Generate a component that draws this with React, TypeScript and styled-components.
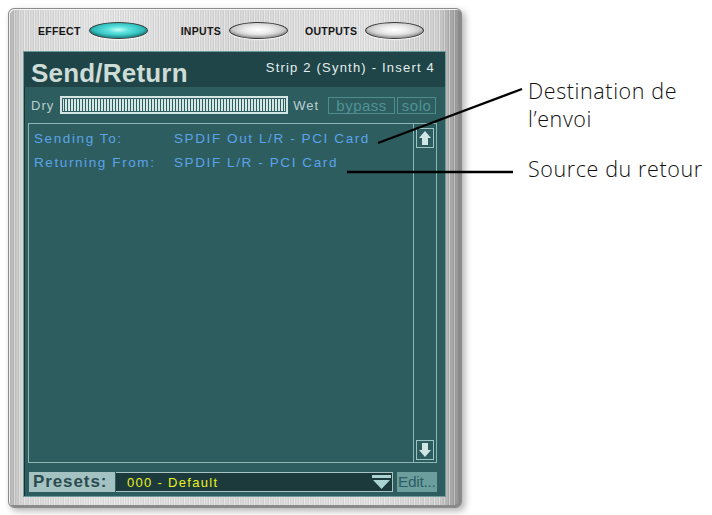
import React from 'react';
import styled, { createGlobalStyle } from 'styled-components';

const GlobalStyle = createGlobalStyle`
  html, body {
    margin: 0;
    padding: 0;
    background: #ffffff;
  }
  body {
    font-family: 'Liberation Sans', Arial, sans-serif;
  }
`;

const Page = styled.div`
  position: relative;
  width: 712px;
  height: 515px;
  display: flex;
  flex-direction: row;
  align-items: flex-start;
  padding: 8px 0 0 8px;
  box-sizing: border-box;
`;

const Window = styled.div`
  width: 454px;
  height: 500px;
  box-sizing: border-box;
  display: flex;
  flex-direction: column;
  padding: 0 16px 11px 15px;
  border: 1px solid #8c8c8c;
  border-radius: 6px;
  background:
    repeating-linear-gradient(
      90deg,
      rgba(255, 255, 255, 0.35) 0 1px,
      rgba(0, 0, 0, 0.04) 1px 2px,
      rgba(255, 255, 255, 0) 2px 4px,
      rgba(0, 0, 0, 0.06) 4px 5px
    ),
    linear-gradient(
      90deg,
      #b4b4b4 0,
      #d8d8d8 3%,
      #e4e4e4 20%,
      #d8d8d8 50%,
      #e2e2e2 80%,
      #cfcfcf 95%,
      #8e8e8e 100%
    );
  box-shadow: 3px 3px 7px rgba(0, 0, 0, 0.3), inset 1px 1px 0 #f4f4f4,
    inset -2px -2px 0 #8a8a8a;
`;

const TopBar = styled.div`
  height: 43px;
  display: flex;
  align-items: center;
`;

const TabGroup = styled.div<{ $ml: number }>`
  display: flex;
  align-items: center;
  gap: 8px;
  margin-left: ${(p) => p.$ml}px;
`;

const TabLabel = styled.span`
  font-family: 'Liberation Sans', Arial, sans-serif;
  font-weight: 700;
  font-size: 10.5px;
  letter-spacing: 0.3px;
  color: #151515;
  transform: scaleY(1.1);
`;

const Pill = styled.div<{ $active?: boolean }>`
  width: 57px;
  height: 15px;
  border-radius: 50%;
  border: 1.5px solid #3a3a3a;
  background: ${(p) =>
    p.$active
      ? 'radial-gradient(ellipse at 50% 45%, #c8fffb 0, #5fe3df 25%, #2fbdbc 60%, #17807f 100%)'
      : 'radial-gradient(ellipse at 50% 45%, #ffffff 0, #eeeeee 30%, #c4c4c4 70%, #8e8e8e 100%)'};
  box-shadow: 0 1px 1px rgba(255, 255, 255, 0.8), inset 0 -2px 2px rgba(0, 0, 0, 0.2);
`;

const Panel = styled.div`
  flex: 1;
  display: flex;
  flex-direction: column;
  background: #2e5d60;
  box-shadow: inset 1px 1px 0 #153436, 0 0 0 1px #6f9a9a;
`;

const TitleBar = styled.div`
  height: 35px;
  background: #1f4548;
  display: flex;
  align-items: flex-start;
  justify-content: space-between;
  padding: 0 10px 0 7px;
`;

const Title = styled.span`
  font-family: 'Liberation Sans', Arial, sans-serif;
  font-weight: 700;
  font-size: 26px;
  line-height: 26px;
  margin-top: 8px;
  letter-spacing: 0.2px;
  color: #cddcd6;
`;

const StripInfo = styled.span`
  font-family: 'Liberation Sans', Arial, sans-serif;
  font-size: 13px;
  margin-top: 8px;
  letter-spacing: 1.2px;
  color: #e4eeee;
`;

const MixRow = styled.div`
  height: 36px;
  display: flex;
  align-items: center;
  padding-left: 7px;
`;

const MixLabel = styled.span`
  font-family: 'Liberation Sans', Arial, sans-serif;
  font-size: 13px;
  letter-spacing: 1px;
  color: #b9cfcf;
`;

const Meter = styled.div`
  width: 224px;
  height: 14px;
  margin: 0 5px 0 6px;
  border: 2px solid #d4e6e4;
  background: repeating-linear-gradient(
    90deg,
    #d6e8e6 0 2px,
    #2e5d60 2px 3px
  );
  box-shadow: inset 0 0 0 1px #2e5d60;
`;

const ToggleBox = styled.span<{ $w: number; $ml: number }>`
  width: ${(p) => p.$w}px;
  height: 17px;
  box-sizing: border-box;
  border: 1px solid #4d8d8e;
  display: flex;
  align-items: center;
  justify-content: center;
  margin-left: ${(p) => p.$ml}px;
  font-family: 'Liberation Sans', Arial, sans-serif;
  font-size: 15px;
  letter-spacing: 0.5px;
  color: #4f9394;
`;

const ContentBox = styled.div`
  height: 340px;
  margin: 0 8px 0 4px;
  box-sizing: border-box;
  border: 1px solid #8db6b5;
  display: flex;
`;

const RoutingList = styled.div`
  flex: 1;
  padding: 2px 0 0 5px;
`;

const RouteRow = styled.div`
  display: flex;
  height: 24px;
  align-items: center;
  font-family: 'Liberation Sans', Arial, sans-serif;
  font-size: 13.5px;
  letter-spacing: 1.6px;
  color: #5ba4ea;
`;

const RouteKey = styled.span`
  width: 140px;
`;

const ScrollColumn = styled.div`
  width: 22px;
  border-left: 1px solid #8db6b5;
  display: flex;
  flex-direction: column;
  justify-content: space-between;
  align-items: center;
  padding: 4px 0 2px;
`;

const ArrowBtn = styled.div`
  width: 18px;
  height: 20px;
  box-sizing: border-box;
  border: 1px solid #9cc4c2;
  display: flex;
  align-items: center;
  justify-content: center;
`;

const PresetRow = styled.div`
  height: 20px;
  margin: 9px 8px 0 5px;
  display: flex;
  align-items: stretch;
`;

const PresetLabel = styled.span`
  width: 86px;
  background: #a3c2c1;
  font-family: 'Liberation Sans', Arial, sans-serif;
  font-weight: 700;
  font-size: 17px;
  line-height: 20px;
  letter-spacing: 0.9px;
  color: #2b4b4f;
  padding-left: 4px;
  box-sizing: border-box;
`;

const PresetField = styled.div`
  width: 277px;
  margin-left: 1px;
  box-sizing: border-box;
  background: #1c393b;
  border: 1px solid #a9c4c3;
  border-left: none;
  display: flex;
  align-items: center;
  justify-content: space-between;
  padding: 0 1px 0 11px;
`;

const PresetValue = styled.span`
  font-family: 'Liberation Sans', Arial, sans-serif;
  font-size: 13px;
  letter-spacing: 1.3px;
  color: #e8f21e;
`;

const EditButton = styled.span`
  flex: 1;
  margin-left: 4px;
  background: #6d9e9e;
  font-family: 'Liberation Sans', Arial, sans-serif;
  font-size: 15.5px;
  line-height: 20px;
  letter-spacing: -0.3px;
  color: #2c5e63;
  padding-left: 1px;
  overflow: hidden;
  white-space: nowrap;
`;

const Notes = styled.div`
  margin-left: 66px;
  margin-top: 69px;
  display: flex;
  flex-direction: column;
`;

const NoteText = styled.div<{ $gap?: number }>`
  font-family: 'Open Sans', 'Noto Sans', sans-serif;
  font-weight: 300;
  font-size: 21.5px;
  line-height: 28px;
  letter-spacing: 0.6px;
  color: #111111;
  margin-top: ${(p) => p.$gap ?? 0}px;
`;

const Leaders = styled.svg`
  position: absolute;
  left: 0;
  top: 0;
  pointer-events: none;
`;

const UpArrow = () => (
  <svg width="14" height="16" viewBox="0 0 14 16">
    <polygon points="7,1 13,8 10,8 10,15 4,15 4,8 1,8" fill="#cfe6e4" />
  </svg>
);

const DownArrow = () => (
  <svg width="14" height="16" viewBox="0 0 14 16">
    <polygon points="7,15 13,8 10,8 10,1 4,1 4,8 1,8" fill="#cfe6e4" />
  </svg>
);

const DropTriangle = () => (
  <svg width="19" height="16" viewBox="0 0 19 16">
    <rect x="0" y="1" width="19" height="3" fill="#aad3d2" />
    <polygon points="1,6 18,6 9.5,15" fill="#aad3d2" />
  </svg>
);

export default function App() {
  return (
    <>
      <GlobalStyle />
      <Page>
        <Window>
          <TopBar>
            <TabGroup $ml={14}>
              <TabLabel>EFFECT</TabLabel>
              <Pill $active />
            </TabGroup>
            <TabGroup $ml={33}>
              <TabLabel>INPUTS</TabLabel>
              <Pill />
            </TabGroup>
            <TabGroup $ml={17}>
              <TabLabel>OUTPUTS</TabLabel>
              <Pill />
            </TabGroup>
          </TopBar>
          <Panel>
            <TitleBar>
              <Title>Send/Return</Title>
              <StripInfo>Strip 2 (Synth) - Insert 4</StripInfo>
            </TitleBar>
            <MixRow>
              <MixLabel>Dry</MixLabel>
              <Meter />
              <MixLabel>Wet</MixLabel>
              <ToggleBox $w={67} $ml={9}>bypass</ToggleBox>
              <ToggleBox $w={39} $ml={2}>solo</ToggleBox>
            </MixRow>
            <ContentBox>
              <RoutingList>
                <RouteRow>
                  <RouteKey>Sending To:</RouteKey>
                  <span>SPDIF Out L/R - PCI Card</span>
                </RouteRow>
                <RouteRow>
                  <RouteKey>Returning From:</RouteKey>
                  <span>SPDIF L/R - PCI Card</span>
                </RouteRow>
              </RoutingList>
              <ScrollColumn>
                <ArrowBtn>
                  <UpArrow />
                </ArrowBtn>
                <ArrowBtn>
                  <DownArrow />
                </ArrowBtn>
              </ScrollColumn>
            </ContentBox>
            <PresetRow>
              <PresetLabel>Presets:</PresetLabel>
              <PresetField>
                <PresetValue>000 - Default</PresetValue>
                <DropTriangle />
              </PresetField>
              <EditButton>Edit...</EditButton>
            </PresetRow>
          </Panel>
        </Window>
        <Notes>
          <NoteText>Destination de</NoteText>
          <NoteText>l’envoi</NoteText>
          <NoteText $gap={22}>Source du retour</NoteText>
        </Notes>
        <Leaders width="712" height="515">
          <line x1="378" y1="143" x2="522" y2="89" stroke="#000" strokeWidth="2.2" />
          <line x1="347" y1="172" x2="513" y2="172" stroke="#000" strokeWidth="2.4" />
        </Leaders>
      </Page>
    </>
  );
}
